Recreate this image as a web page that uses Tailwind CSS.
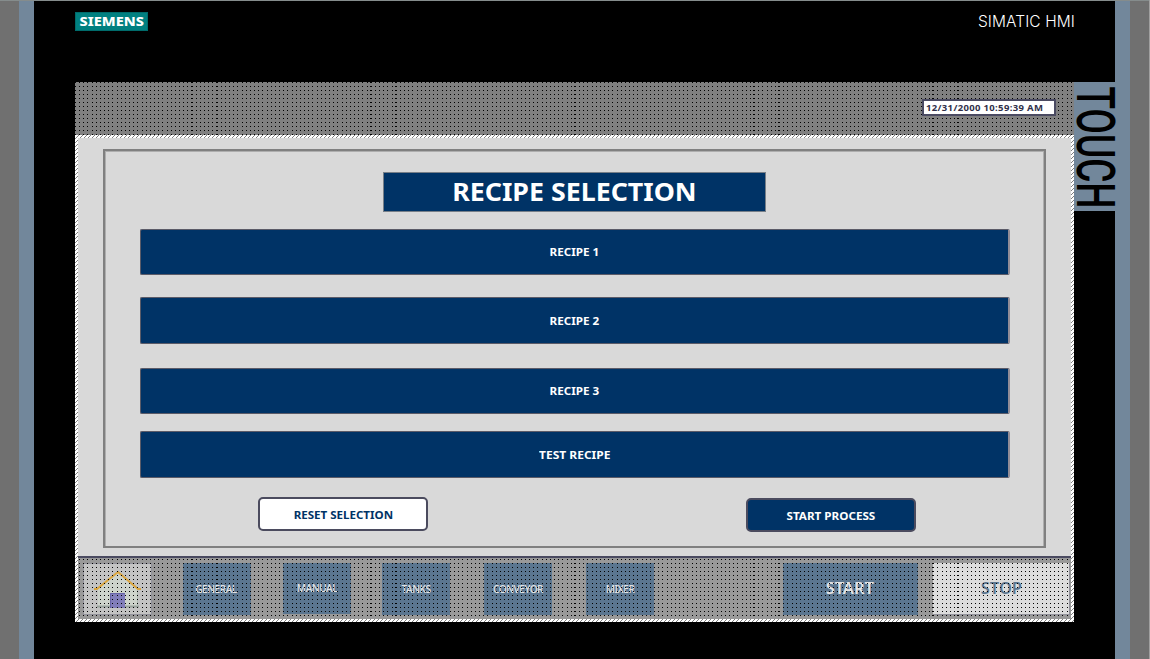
<!DOCTYPE html>
<html lang="en">
<head>
<meta charset="utf-8">
<title>SIMATIC HMI</title>
<script src="https://cdn.jsdelivr.net/npm/@tailwindcss/browser@4"></script>
</head>
<body class="w-[1150px] h-[659px] overflow-hidden bg-[#a0a0a0] font-['Noto_Sans',sans-serif]">
<svg width="0" height="0" class="absolute">
  <defs>
    <pattern id="dots" width="25" height="4" patternUnits="userSpaceOnUse">
      <path d="M0 0h1v1h-1zM4 0h1v1h-1zM8 0h1v1h-1zM12 0h1v1h-1zM17 0h1v1h-1zM21 0h1v1h-1z" fill="#000" shape-rendering="crispEdges"/>
    </pattern>
    <pattern id="extra" width="1000" height="4" patternUnits="userSpaceOnUse">
      <path d="M116 0h1v1h-1zM141 0h1v1h-1zM295 0h1v1h-1zM320 0h1v1h-1zM499 0h1v1h-1zM678 0h1v1h-1zM703 0h1v1h-1zM857 0h1v1h-1zM882 0h1v1h-1z" fill="#000" shape-rendering="crispEdges"/>
    </pattern>
    <pattern id="hatch" width="4" height="4" patternUnits="userSpaceOnUse">
      <path d="M0 0h4v4h-4z" fill="#fff"/>
      <path d="M3 0h1v1h-1zM2 1h1v1h-1zM1 2h1v1h-1zM0 3h1v1h-1z" fill="#808080" shape-rendering="crispEdges"/>
    </pattern>
  </defs>
</svg>
<div class="flex h-[659px] w-[1149px] border-t border-[#858c8c]">
  <div class="w-[19px] bg-[#707070]"></div>
  <div class="w-[15px] bg-[#72879b]"></div>
  <main class="flex w-[1081px] flex-col bg-black">
    <header class="flex h-[81px] items-start justify-between pl-[41px] pr-[40px] pt-[11px]">
      <div class="flex h-[19px] w-[73px] items-center justify-center border border-[#006b6b] bg-[#008080] text-[13px] leading-none font-extrabold text-white"><span class="inline-block scale-x-[1.12]">SIEMENS</span></div>
      <div class="pt-[1px] font-[Inter,sans-serif] text-[15.5px] leading-[17px] font-light tracking-[0.1px] text-white">SIMATIC HMI</div>
    </header>
    <div class="flex pl-[41px]">
      <div class="relative flex h-[540px] w-[999px] shrink-0 flex-col bg-[#d9d9d9]">
        <div class="relative flex h-[53px] shrink-0 justify-end bg-[#808080] pr-[18px] pt-[17px]">
          <svg class="absolute inset-0" width="999" height="53"><rect width="999" height="53" fill="url(#dots)"/><rect width="999" height="53" fill="url(#extra)"/></svg>
          <div class="relative flex h-[17px] w-[134px] items-center border-2 border-[#4b4b62] bg-white pl-[2px] text-[9.5px] leading-none font-bold tracking-[0.34px] whitespace-nowrap text-[#31314a]"><span>12/31/2000 10:59:39 AM</span></div>
        </div>
        <section class="ml-[28px] mt-[14px] flex h-[399px] w-[943px] flex-col items-center border-2 border-[#808080] pt-[21px] shadow-[inset_1px_1px_0_#aeaeae,inset_-1px_0_0_#aeaeae]">
          <h1 class="flex h-[40px] w-[383px] items-center justify-center border border-[#777f88] bg-[#003366] text-[25.5px] leading-none font-bold text-white"><span class="inline-block scale-x-[1.05]">RECIPE SELECTION</span></h1>
          <button class="mt-[17px] h-[46px] w-[870px] shrink-0 rounded-[2px] border border-r-2 border-[#5b5b68] border-r-[#918c96] bg-[#003366] pl-px text-[11px] font-bold text-white"><span class="inline-block scale-x-[1.06]">RECIPE 1</span></button>
          <button class="mt-[22px] h-[47px] w-[870px] shrink-0 rounded-[2px] border border-r-2 border-[#5b5b68] border-r-[#918c96] bg-[#003366] pt-px pl-px text-[11px] font-bold text-white"><span class="inline-block scale-x-[1.06]">RECIPE 2</span></button>
          <button class="mt-[24px] h-[46px] w-[870px] shrink-0 rounded-[2px] border border-r-2 border-[#5b5b68] border-r-[#918c96] bg-[#003366] pl-px text-[11px] font-bold text-white"><span class="inline-block scale-x-[1.06]">RECIPE 3</span></button>
          <button class="mt-[17px] h-[47px] w-[870px] shrink-0 rounded-[2px] border border-r-2 border-[#5b5b68] border-r-[#918c96] bg-[#003366] pt-px pl-px text-[11px] font-bold text-white"><span class="inline-block scale-x-[1.09]">TEST RECIPE</span></button>
          <div class="mt-[19px] flex w-[658px] justify-between self-start ml-[153px]">
            <button class="h-[34px] w-[170px] rounded-[5px] border-2 border-[#4b4b5e] bg-white pt-[2px] text-[11px] font-bold text-[#003366]"><span class="inline-block scale-x-[1.05]">RESET SELECTION</span></button>
            <button class="mt-px h-[34px] w-[170px] rounded-[5px] border-2 border-[#4b4b5e] bg-[#003366] pt-[2px] text-[11px] font-bold text-white"><span class="inline-block scale-x-[1.06]">START PROCESS</span></button>
          </div>
        </section>
        <nav class="mx-[3px] mt-[8px] flex h-[63px] shrink-0 border-t-2 border-[#4a4a60] bg-[#999] pt-[5px] text-[10px] text-[#e3e3e3]">
          <button class="ml-[5px] flex h-[52px] w-[69px] justify-center border border-[#92929b] bg-[#c3c3c3]">
            <svg width="50" height="50" viewBox="0 0 50 50">
              <path d="M5 43V24L25 8L44 24V43z" fill="#cdd3cb"/>
              <path d="M4 42.500h42" stroke="#9aa39e" stroke-width="2"/>
              <path d="M44.500 24v18" stroke="#afbbb4" stroke-width="1"/>
              <path d="M17 29h15v15h-15z" fill="#817dba"/>
              <path d="M17.500 44v-14.500h14.500" fill="none" stroke="#6864a8"/>
              <path d="M1 25h3L25 8L45 25h3" fill="none" stroke="#dba63f" stroke-width="2"/>
            </svg>
          </button>
          <button class="ml-[31px] h-[52px] w-[68px] bg-[#5b7690] pt-px pr-[2px] font-medium"><span class="tracking-[-0.4px]">GENERAL</span></button>
          <button class="ml-[32px] h-[51px] w-[68px] bg-[#5b7690] font-medium"><span class="tracking-[-0.4px]">MANUAL</span></button>
          <button class="ml-[31px] h-[52px] w-[68px] bg-[#5b7690] pt-px font-medium"><span class="tracking-[-0.4px]">TANKS</span></button>
          <button class="ml-[34px] h-[52px] w-[68px] bg-[#5b7690] pt-px font-medium"><span class="tracking-[-0.4px]">CONVEYOR</span></button>
          <button class="ml-[34px] h-[52px] w-[68px] bg-[#5b7690] pt-px font-medium"><span class="tracking-[-0.4px]">MIXER</span></button>
          <button class="ml-[129px] h-[52px] w-[135px] bg-[#5b7690] pr-[2px] text-[15.5px] font-semibold"><span class="inline-block scale-x-[1.06]">START</span></button>
          <button class="ml-[15px] h-[52px] w-[137px] border-r border-b border-[#92929b] bg-[#dcdcdc] text-[15.5px] font-semibold text-[#5b7690]"><span class="inline-block scale-x-[1.06]">STOP</span></button>
        </nav>
        <svg class="pointer-events-none absolute left-0 top-[53px]" width="999" height="487">
          <path d="M0 0H999V487H0zM3 3V484H996V3z" fill="url(#hatch)" fill-rule="evenodd"/>
          <g transform="translate(0 424)"><path d="M3 0H996V60H3z" fill="url(#dots)"/><path d="M3 0H996V60H3z" fill="url(#extra)"/></g>
        </svg>
      </div>
      <div class="relative h-[129px] w-[41px] shrink-0 bg-[#72879b]">
        <svg class="absolute inset-0 overflow-visible" width="41" height="129"><text transform="translate(3 4.500) rotate(90)" textLength="122" lengthAdjust="spacingAndGlyphs" font-family="Roboto, sans-serif" font-size="53" font-weight="500" fill="#000">TOUCH</text></svg>
      </div>
    </div>
  </main>
  <div class="w-[15px] bg-[#72879b]"></div>
  <div class="w-[19px] bg-[#707070]"></div>
</div>
</body>
</html>
